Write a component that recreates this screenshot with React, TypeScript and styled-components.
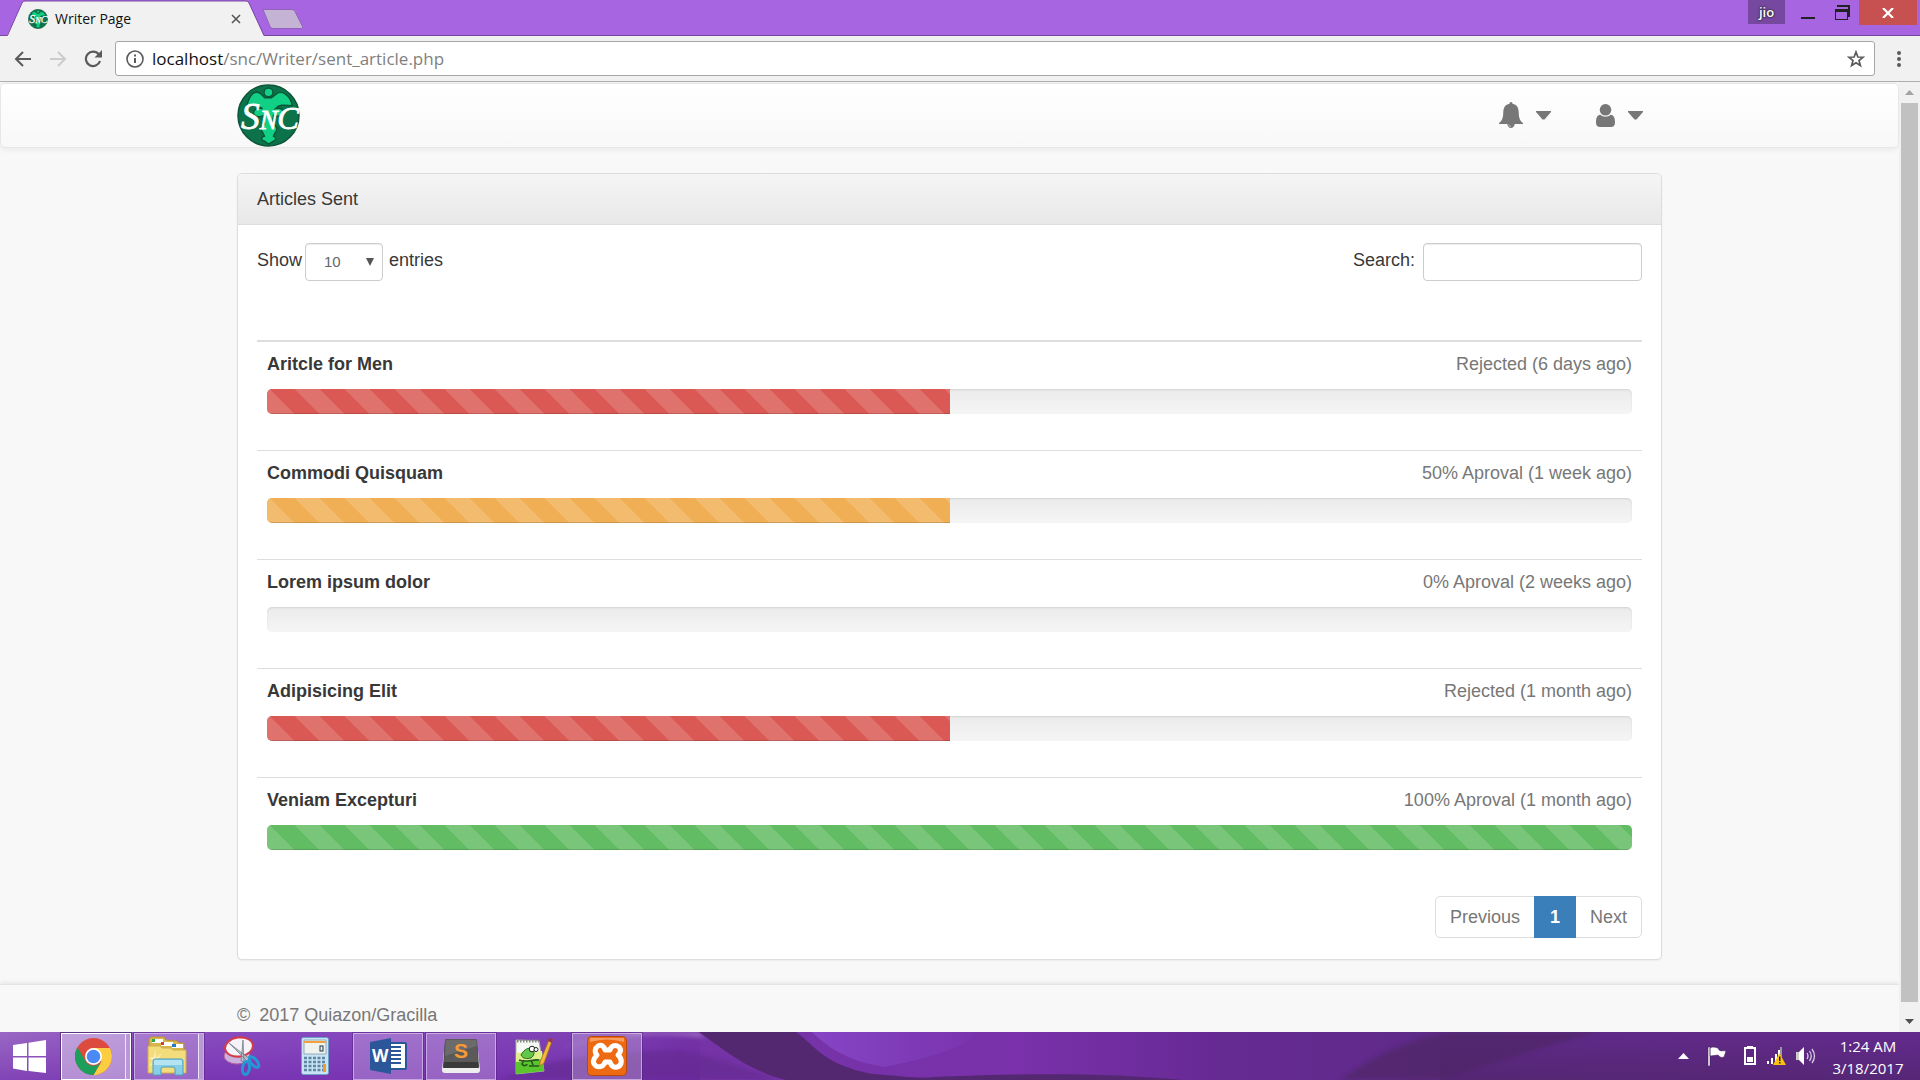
import React from 'react';
import styled, { createGlobalStyle, css } from 'styled-components';

const ui = `"Open Sans", "Noto Sans", sans-serif`;

const Global = createGlobalStyle`
  *, *::before, *::after { box-sizing: border-box; }
  html, body { margin: 0; height: 100%; }
  #root { height: 100%; }
  body { font-family: "Liberation Sans", Arial, sans-serif; font-size: 18px; line-height: 25px; color: #383838; overflow: hidden; }
  button { font: inherit; color: inherit; border: 0; padding: 0; margin: 0; background: none; cursor: pointer; }
  svg { display: block; }
`;

const Screen = styled.div`
  display: flex;
  flex-direction: column;
  height: 100vh;
`;

/* ---------- browser ---------- */
const TitleBar = styled.div`
  display: flex;
  height: 36px;
  background: #a865e2;
  border-bottom: 1px solid #7746a3;
`;
const Tab = styled.div`
  position: relative;
  width: 272px;
  height: 36px;
  flex: none;
  display: flex;
  align-items: center;
  padding: 2px 30px 0 28px;
`;
const TabShape = styled.svg`
  position: absolute;
  left: 0;
  top: 0;
`;
const TabTitle = styled.span`
  position: relative;
  flex: 1;
  margin-left: 7px;
  font: 14px/20px ${ui};
  color: #111;
`;
const TabIcon = styled.span`
  position: relative;
`;
const TabClose = styled.button`
  position: relative;
`;
const NewTab = styled.button`
  margin: 9px auto 0 -10px;
  height: 20px;
`;
const Profile = styled.button`
  width: 37px;
  height: 24px;
  margin-right: 6px;
  background: #77489f;
  color: #fff;
  font: 600 13px/22px ${ui};
  text-shadow: 0 0 2px #222, 0 0 2px #222;
`;
const WindowButton = styled.button<{ $close?: boolean }>`
  display: grid;
  place-items: center;
  width: ${(p) => (p.$close ? 58 : 34)}px;
  height: 25px;
  background: ${(p) => (p.$close ? '#c75050' : 'none')};
`;
const WindowButtons = styled.div`
  display: flex;
  padding-right: 3px;
`;
const Toolbar = styled.div`
  display: flex;
  align-items: center;
  height: 46px;
  flex: none;
  padding: 0 11px 0 12px;
  background: #f1f1f1;
  border-bottom: 1px solid #aeaeae;
`;
const ToolGroup = styled.div`
  display: flex;
  gap: 13px;
  padding-right: 11px;
`;
const ToolButton = styled.button`
  display: grid;
  place-items: center;
  width: 22px;
  height: 22px;
`;
const Omnibox = styled.div`
  display: flex;
  flex: 1;
  align-items: center;
  height: 35px;
  margin-right: 14px;
  padding: 0 9px 0 10px;
  gap: 8px;
  background: #fff;
  border: 1px solid #a6a6a6;
  border-radius: 3px;
`;
const Url = styled.a`
  flex: 1;
  font: 17px/24px ${ui};
  color: #808080;
  text-decoration: none;
  b { font-weight: 400; color: #111; }
`;

/* ---------- page ---------- */
const Viewport = styled.div`
  display: flex;
  flex: 1;
  min-height: 0;
  background: #f8f8f8;
`;
const Page = styled.div`
  flex: 1;
  min-width: 0;
  overflow: hidden;
  padding-top: 1px;
`;
const ScrollTrack = styled.div`
  display: flex;
  flex-direction: column;
  width: 21px;
  padding: 0 2px;
  background: #f1f1f1;
`;
const ScrollArrow = styled.button`
  display: grid;
  place-items: center;
  height: 21px;
  flex: none;
`;
const ScrollThumb = styled.div`
  flex: 1;
  margin-bottom: 9px;
  background: #c1c1c1;
`;
const NavBar = styled.nav`
  height: 65px;
  border: 1px solid #e7e7e7;
  border-radius: 5px;
  background: linear-gradient(#fff, #f8f8f8);
  box-shadow: 0 1px 6px rgba(0, 0, 0, 0.075);
`;
const Container = styled.div`
  max-width: 1425px;
  margin: 0 auto;
`;
const NavRow = styled(Container)`
  display: flex;
  align-items: flex-start;
  justify-content: space-between;
`;
const Menus = styled.div`
  display: flex;
  gap: 45px;
  padding: 18px 19px 0 0;
`;
const MenuButton = styled.button`
  display: flex;
  align-items: center;
  gap: 13px;
  height: 26px;
`;
const Panel = styled(Container).attrs({ as: 'section' })`
  margin-top: 25px;
  background: #fff;
  border: 1px solid #ddd;
  border-radius: 5px;
  box-shadow: 0 1px 2px rgba(0, 0, 0, 0.05);
`;
const PanelHeading = styled.h1`
  margin: 0;
  padding: 13px 19px 12px;
  font-size: inherit;
  font-weight: 400;
  line-height: 25px;
  background: linear-gradient(#f5f5f5, #e8e8e8);
  border-bottom: 1px solid #ddd;
  border-radius: 4px 4px 0 0;
`;
const PanelBody = styled.div`
  padding: 18px 19px 21px;
`;
const Controls = styled.div`
  display: flex;
  justify-content: space-between;
  height: 97px;
`;
const Field = styled.label`
  display: flex;
  line-height: 34px;
`;
const inputLook = css`
  height: 38px;
  border: 1px solid #ccc;
  border-radius: 4px;
  background: #fff;
  box-shadow: inset 0 1px 1px rgba(0, 0, 0, 0.075);
  color: #666;
  font: 15px/20px "Liberation Sans", Arial, sans-serif;
`;
const SelectWrap = styled.span`
  display: grid;
  align-items: center;
  margin: 0 6px 0 3px;
  height: 38px;
  > * { grid-area: 1 / 1; }
  svg { justify-self: end; margin-right: 9px; pointer-events: none; }
`;
const LengthSelect = styled.select`
  ${inputLook}
  width: 78px;
  padding: 0 18px;
  appearance: none;
`;
const SearchInput = styled.input`
  ${inputLook}
  width: 219px;
  margin-left: 8px;
  padding: 0 12px;
`;
const Table = styled.table`
  width: 100%;
  border-collapse: separate;
  border-spacing: 0;
  border-top: 2px solid #ddd;
`;
const Cell = styled.td`
  padding: 10px;
  tr + tr & { border-top: 1px solid #ddd; }
`;
const RowHead = styled.div`
  display: flex;
  justify-content: space-between;
  margin-bottom: 12px;
  line-height: 25px;
`;
const Status = styled.span`
  color: #777;
`;
const Track = styled.div`
  height: 25px;
  margin-bottom: 26px;
  overflow: hidden;
  border-radius: 5px;
  background: linear-gradient(#ebebeb, #f5f5f5);
  box-shadow: inset 0 1px 2px rgba(0, 0, 0, 0.1);
`;
const Fill = styled.div<{ $color: string }>`
  height: 100%;
  background-color: ${(p) => p.$color};
  background-image: linear-gradient(45deg, rgba(255, 255, 255, 0.15) 25%, transparent 25%, transparent 50%, rgba(255, 255, 255, 0.15) 50%, rgba(255, 255, 255, 0.15) 75%, transparent 75%, transparent);
  background-size: 50px 50px;
  background-position: 28px 0;
  box-shadow: inset 0 -1px 0 rgba(0, 0, 0, 0.15);
`;
const Pagination = styled.div`
  display: flex;
  justify-content: flex-end;
  margin-top: 10px;
`;
const PageButton = styled.button<{ $active?: boolean }>`
  height: 42px;
  padding: 0;
  border: 1px solid #ddd;
  color: #777;
  background: #fff;
  &:first-child { width: 100px; margin-right: -1px; border-radius: 5px 0 0 5px; }
  &:last-child { width: 67px; margin-left: -1px; border-radius: 0 5px 5px 0; }
  ${(p) => p.$active && css`
    position: relative;
    width: 42px;
    color: #fff;
    font-weight: 700;
    background: #3a7fba;
    border-color: #3a7fba;
  `}
`;
const Footer = styled.footer`
  margin-top: 24px;
  padding: 18px 0;
  border-top: 1px solid #e4e4e4;
  box-shadow: 0 -1px 5px rgba(0, 0, 0, 0.09);
  color: #777;
`;
const Mark = styled.span`
  margin-right: 9px;
`;

/* ---------- taskbar ---------- */
const TaskBar = styled.div`
  display: grid;
  height: 48px;
  flex: none;
  > * { grid-area: 1 / 1; min-width: 0; }
`;
const TaskRow = styled.div`
  z-index: 1;
  display: flex;
  justify-content: space-between;
`;
const Apps = styled.div`
  display: flex;
  align-items: center;
`;
const AppButton = styled.button<{ $state?: 'open' | 'active'; $stack?: boolean; $start?: boolean }>`
  display: grid;
  place-items: center;
  width: ${(p) => (p.$start ? 58 : 70)}px;
  height: 47px;
  margin-right: 3px;
  padding-right: ${(p) => (p.$stack ? 5 : 0)}px;
  ${(p) => p.$state === 'open' && css`
    background: rgba(255, 255, 255, 0.24);
    border: 1px solid rgba(224, 205, 240, 0.65);
    outline: 1px solid rgba(70, 25, 110, 0.4);
  `}
  ${(p) => p.$state === 'active' && css`
    background: rgba(255, 255, 255, 0.42);
    border: 1px solid #fff;
    outline: 1px solid #5b3380;
  `}
  ${(p) => p.$stack && css`
    box-shadow: inset -4px 0 0 rgba(130, 80, 180, 0.5), inset -5px 0 0 #efe3f8;
  `}
`;
const Tray = styled.div`
  display: flex;
  align-items: center;
`;
const TrayButton = styled.button<{ $gap: number }>`
  margin-right: ${(p) => p.$gap}px;
`;
const Clock = styled.time`
  width: 104px;
  padding-top: 2px;
  text-align: center;
  color: #fff;
  font: 15px/22px ${ui};
`;

/* ---------- drawings ---------- */
const Seal = ({ size }: { size: number }) => (
  <svg width={size} height={size} viewBox="0 0 64 64" aria-hidden="true">
    <circle cx="32" cy="32" r="31" fill="#0b7249" stroke="#0d5438" strokeWidth="1.5" />
    <g fill="#12cf86" stroke="#0a5536" strokeWidth="1.4">
      <path d="M28 14c-6-8-12-7-15 0-2 4-3 7-3 10 6-2 12-2 16 1-5-1-10 1-9 5 2 5 8 3 10 2l1 9c-4 1-5 5-2 8l2 4c-4 1-4 4 0 5l4 3 5-3c3-1 3-4 0-5l2-4c3-3 1-7-3-8l1-9c6 2 10 0 10-4 0-3-5-4-8-3 3-4 8-4 17-3-1-8-9-17-16-12l-5 4z" />
      <circle cx="32" cy="8.500" r="4.500" />
    </g>
    <text x="4" y="46" fill="#fff" stroke="#fff" strokeWidth=".8" fontFamily='"Liberation Serif", serif' fontStyle="italic">
      <tspan fontSize="38">S</tspan><tspan fontSize="27">N</tspan><tspan fontSize="33">C</tspan>
    </text>
  </svg>
);
const Caret = () => (
  <svg width="15" height="9" viewBox="0 0 15 9" aria-hidden="true"><path d="M0 0h15v1L8.500 8.500h-2L0 1z" fill="#777" /></svg>
);
const Bell = () => (
  <svg width="24" height="26" viewBox="0 0 24 26" aria-hidden="true">
    <path d="M12 0c1 0 1.500.7 1.500 1.800C17.800 2.500 19.600 6 19.700 10c.1 6 1.300 9 4.300 11v1h-8.300c-.2 2.300-1.700 4-3.700 4s-3.500-1.700-3.700-4H0v-1c3-2 4.200-5 4.300-11C4.400 6 6.200 2.500 10.500 1.800 10.500.7 11 0 12 0z" fill="#777" />
    <path d="M9.800 22.500c.2 1.300 1 2 2.200 2" fill="none" stroke="#ddd" strokeWidth=".7" />
  </svg>
);
const User = () => (
  <svg width="19" height="23" viewBox="0 0 19 23" aria-hidden="true">
    <circle cx="9.500" cy="5.800" r="5.800" fill="#777" />
    <path d="M4.200 10.800c3 2.500 7.600 2.500 10.600 0C18 11 19 14.500 19 18.500c0 3-1.500 4.500-4 4.500H4c-2.500 0-4-1.500-4-4.500 0-4 1-7.500 4.200-7.700z" fill="#777" />
  </svg>
);
const Wallpaper = () => (
  <svg width="100%" height="48" viewBox="0 0 1920 48" preserveAspectRatio="none" aria-hidden="true">
    <defs>
      <linearGradient id="sky">
        <stop offset="0" stopColor="#9a68c4" /><stop offset=".08" stopColor="#8a4fc0" /><stop offset=".2" stopColor="#8445bd" />
        <stop offset=".3" stopColor="#7f42b4" /><stop offset=".36" stopColor="#7433a6" /><stop offset=".53" stopColor="#7a31ab" />
        <stop offset=".63" stopColor="#672a94" /><stop offset=".75" stopColor="#5e2a88" /><stop offset=".9" stopColor="#622a89" /><stop offset="1" stopColor="#632b8e" />
      </linearGradient>
      <linearGradient id="fade" x2="0" y2="1"><stop offset="0" stopColor="#6a20a8" stopOpacity="0" /><stop offset="1" stopColor="#6a20a8" stopOpacity=".5" /></linearGradient>
      <linearGradient id="dusk" x2="0" y2="1"><stop offset="0" stopColor="#4d2467" stopOpacity="0" /><stop offset="1" stopColor="#4d2467" stopOpacity=".6" /></linearGradient>
      <linearGradient id="glow"><stop offset="0" stopColor="#8645c6" /><stop offset="1" stopColor="#8645c6" stopOpacity=".1" /></linearGradient>
      <filter id="soft"><feGaussianBlur stdDeviation="2" /></filter>
    </defs>
    <path d="M0 0h1920v48H0z" fill="url(#sky)" />
    <path d="M0 0h700v48H0z" fill="url(#fade)" />
    <path d="M500 48c40-22 110-28 180-30 40 8 70 20 100 30z" fill="#632a8e" opacity=".6" filter="url(#soft)" />
    <path d="M560 16c50-14 100-16 146-10l-8-6h-60z" fill="#b58ad0" opacity=".6" filter="url(#soft)" />
    <path d="M812 0h165c-10 16-50 26-92 35-40-6-58-21-73-35z" fill="url(#glow)" />
    <path d="M699 0h97c20 14 26 32 76 42 30 2 50 5 60 3 90-4 180-4 250 3H786C746 38 722 16 699 0z" fill="#542771" />
    <path d="M1340 48c30-20 60-40 110-48h150c-60 14-110 34-160 48z" fill="#4f2766" opacity=".7" filter="url(#soft)" />
    <path d="M1440 0h480v48h-480z" fill="url(#dusk)" />
  </svg>
);
const Windows = () => (
  <svg width="33" height="33" viewBox="0 0 33 33" fill="#fff" aria-hidden="true">
    <path d="M0 5l14-2v13H0zM15.500 2.700L33 0v16H15.500zM0 17.500h14V31L0 28.500zM15.500 17.500H33V33l-17.500-2z" />
  </svg>
);
const Chrome = () => (
  <svg width="37" height="37" viewBox="0 0 48 48" aria-hidden="true">
    <circle cx="24" cy="24" r="24" fill="#dd4b3e" />
    <path d="M24 13h21.200A24 24 0 0 1 24 48l10.400-18z" fill="#fdcd41" />
    <path d="M13.600 30A12 12 0 0 0 34.400 30L24 48A24 24 0 0 1 3.200 12z" fill="#1c9f5b" />
    <circle cx="24" cy="24" r="11" fill="#fff" /><circle cx="24" cy="24" r="8.800" fill="#4a8af4" />
  </svg>
);
const Explorer = () => (
  <svg width="40" height="40" viewBox="0 0 40 40" aria-hidden="true">
    <path d="M2 36V3l2-2h13l2 3 11 1 2 2h5v30z" fill="#d8b64c" stroke="#b99334" />
    <path d="M5 3h11v4H5zM14 6h12v4H14zM25 8h11v4H25z" fill="#fff" />
    <path d="M5 3h3v3H5z" fill="#2ca748" /><path d="M14 6h3v3h-3z" fill="#dc3b2e" /><path d="M25 8h4v3h-4z" fill="#247ac2" />
    <path d="M1 10h12l2 2h9l2 2h13v23H1z" fill="#f2dc7c" stroke="#cfae4b" />
    <path d="M8 12l1 10 6-5-4 6 9 2-9 1 2 7-5-6-6 4 4-7-5-2 6-1z" fill="#fff7cf" opacity=".7" />
    <path d="M6 39V25q0-2 2-2h26q2 0 2 2v14h-8v-6q0-2-2-2H16q-2 0-2 2v6z" fill="#86cfe6" stroke="#4e9fc0" />
    <path d="M7 24h28v5H7z" fill="#c8edf7" opacity=".7" />
  </svg>
);
const Snip = () => (
  <svg width="38" height="40" viewBox="0 0 38 40" aria-hidden="true">
    <ellipse cx="14" cy="20" rx="13" ry="8" fill="#c9b1df" stroke="#bb5a9b" />
    <ellipse cx="16" cy="11" rx="14" ry="9.500" fill="#f6f3fa" stroke="#d23b47" strokeWidth="2" transform="rotate(-8 16 11)" />
    <path d="M6 7l22 17-3 2zM20 4l1 22-3-1z" fill="#b9c0c8" stroke="#687482" strokeWidth=".7" />
    <ellipse cx="23" cy="32" rx="3.500" ry="6.500" fill="none" stroke="#2597d4" strokeWidth="3" transform="rotate(8 23 32)" />
    <ellipse cx="31" cy="26" rx="3" ry="6.500" fill="none" stroke="#2597d4" strokeWidth="3" transform="rotate(-40 31 26)" />
  </svg>
);
const Calc = () => (
  <svg width="28" height="38" viewBox="0 0 28 38" aria-hidden="true">
    <rect x=".5" y=".5" width="27" height="37" rx="2" fill="#c8e3f3" stroke="#6c9fc5" />
    <path d="M3 3h22v14H3z" fill="#eef3ee" stroke="#90aabb" /><path d="M3 4h22v2H3z" fill="#f3a23b" />
    <rect x="19" y="9" width="3" height="5" fill="none" stroke="#234" />
    <path d="M3 21h22M3 25h22M3 29h22M3 33h22" stroke="#5f87a5" strokeWidth="2.500" strokeDasharray="3 1.500" />
    <path d="M22 27h3v8h-3z" fill="#f39a27" />
  </svg>
);
const Word = () => (
  <svg width="37" height="36" viewBox="0 0 37 36" aria-hidden="true">
    <rect x="18" y="5" width="18" height="26" rx="1" fill="#fff" stroke="#2b579a" strokeWidth="2" />
    <path d="M21 9h10M21 13h10M21 17h10M21 21h10M21 25h10" stroke="#2b579a" strokeWidth="2" />
    <path d="M0 4l21-4v36L0 32z" fill="#2b579a" />
    <text x="2" y="24" fontSize="17" fontWeight="700" fill="#fff" fontFamily='"Open Sans", sans-serif'>W</text>
  </svg>
);
const Sublime = () => (
  <svg width="38" height="36" viewBox="0 0 38 36" aria-hidden="true">
    <path d="M2 13L0 32q0 3 3 3h32q3 0 3-3l-2-19z" fill="#eee" />
    <path d="M5 1h28q2 0 2 2l2 26q0 1-1 1H2q-1 0-1-1L3 3q0-2 2-2z" fill="#3a3a3a" />
    <path d="M5 1h28q2 0 2 2l1 21H2L3 3q0-2 2-2z" fill="#5a5a5a" /><path d="M4 2h30l1 6L3 18z" fill="#777" opacity=".6" />
    <text x="12" y="20" fontSize="21" fontWeight="700" fill="#f79a33" fontFamily='"Liberation Sans", sans-serif'>S</text>
  </svg>
);
const Notepad = () => (
  <svg width="38" height="38" viewBox="0 0 38 38" aria-hidden="true">
    <path d="M1 3l23 1 5 30-28 3z" fill="#f6f8f2" stroke="#a6b0a0" /><path d="M1 20l27-3 1 17-28 3z" fill="#5bc52e" />
    <path d="M1 16l26-2 1 8-27 3z" fill="#dff08a" /><path d="M2 4h22" stroke="#888" strokeWidth="3" strokeDasharray="1.500 1.500" />
    <path d="M4 23c8 3 13-1 20 0M9 23l-2 4c2 3 5 1 5 0m4-4l2 5m-4 1h10" fill="none" stroke="#24561f" strokeWidth="1.600" />
    <path d="M6 18c3-6 8-8 12-6 2 3 1 7-2 9-4 1-8 1-10-3z" fill="#63c84a" stroke="#2b6a22" />
    <circle cx="17" cy="12" r="2.800" fill="#fff" stroke="#222" /><circle cx="21" cy="12.500" r="2" fill="#fff" stroke="#222" />
    <path d="M34 3l3 1-8 22-4 3v-4z" fill="#f5b73e" stroke="#a56f1f" strokeWidth=".8" /><path d="M34 1l4 1-1 4-4-2z" fill="#983848" />
  </svg>
);
const Xampp = () => (
  <svg width="40" height="40" viewBox="0 0 40 40" aria-hidden="true">
    <rect x=".5" y=".5" width="39" height="39" rx="4" fill="#ee6a12" stroke="#b64a0e" /><path d="M3 2h34v4Q20 1 3 6z" fill="#f8b585" opacity=".7" />
    <path d="M11 10c3-2 6 0 7 4h5c1-4 5-6 9-3 3 3 1 6-1 8 5 4 4 11-1 12-4 1-6-2-7-5h-5c-1 4-5 6-9 4-4-3-3-7 1-11-3-3-2-7 1-9z" fill="none" stroke="#fff" strokeWidth="5" strokeLinejoin="round" />
  </svg>
);

type Article = { title: string; status: string; value: number; color: string };
const articles: Article[] = [
  { title: 'Aritcle for Men', status: 'Rejected (6 days ago)', value: 50, color: '#da5954' },
  { title: 'Commodi Quisquam', status: '50% Aproval (1 week ago)', value: 50, color: '#f0af55' },
  { title: 'Lorem ipsum dolor', status: '0% Aproval (2 weeks ago)', value: 0, color: '#62bc63' },
  { title: 'Adipisicing Elit', status: 'Rejected (1 month ago)', value: 50, color: '#da5954' },
  { title: 'Veniam Excepturi', status: '100% Aproval (1 month ago)', value: 100, color: '#62bc63' },
];

const BrowserChrome = () => (
  <>
    <TitleBar>
      <Tab>
        <TabShape width="272" height="36" viewBox="0 0 272 36" aria-hidden="true">
          <path d="M7 36L22 3q1-2 3-2h221q2 0 3 2l15 33z" fill="#f1f1f1" />
          <path d="M0 35.500h7.500L22 3q1-2 3-2h221q2 0 3 2l15 32.500h8" fill="none" stroke="#7746a3" />
        </TabShape>
        <TabIcon><Seal size={20} /></TabIcon>
        <TabTitle>Writer Page</TabTitle>
        <TabClose aria-label="Close tab">
          <svg width="12" height="12" viewBox="0 0 12 12"><path d="M2 2l8 8M10 2l-8 8" stroke="#555" strokeWidth="1.600" /></svg>
        </TabClose>
      </Tab>
      <NewTab aria-label="New tab">
        <svg width="42" height="20" viewBox="0 0 42 20"><path d="M1 .5h29q2 0 3 2l7.500 15q.8 2-1.500 2H11q-2 0-3-2z" fill="#c5b3d5" stroke="#9063b8" /></svg>
      </NewTab>
      <WindowButtons>
        <Profile>jio</Profile>
        <WindowButton aria-label="Minimize"><svg width="14" height="18" viewBox="0 0 14 18"><path d="M0 13h14v2H0z" fill="#222" /></svg></WindowButton>
        <WindowButton aria-label="Restore"><svg width="15" height="16" viewBox="0 0 15 16"><path d="M2 1h12v11" fill="none" stroke="#222" strokeWidth="2" /><path d="M0 4h13v11H0zm1 3v7h11V7z" fill="#222" fillRule="evenodd" /></svg></WindowButton>
        <WindowButton $close aria-label="Close"><svg width="12" height="10" viewBox="0 0 12 10"><path d="M1 0l10 10M11 0L1 10" stroke="#fff" strokeWidth="2.200" /></svg></WindowButton>
      </WindowButtons>
    </TitleBar>
    <Toolbar>
      <ToolGroup>
        <ToolButton aria-label="Back"><svg width="18" height="16" viewBox="0 0 18 16"><path d="M17 8H2M9 1L2 8l7 7" fill="none" stroke="#5a5a5a" strokeWidth="2" /></svg></ToolButton>
        <ToolButton aria-label="Forward"><svg width="18" height="16" viewBox="0 0 18 16"><path d="M1 8h15M9 1l7 7-7 7" fill="none" stroke="#ccc" strokeWidth="2" /></svg></ToolButton>
        <ToolButton aria-label="Reload"><svg width="18" height="18" viewBox="0 0 18 18"><path d="M14.800 4.500A7.200 7.200 0 1 0 16 11" fill="none" stroke="#5a5a5a" strokeWidth="2.200" /><path d="M18 0v7.500h-7.500z" fill="#5a5a5a" /></svg></ToolButton>
      </ToolGroup>
      <Omnibox>
        <svg width="18" height="18" viewBox="0 0 18 18" aria-hidden="true"><circle cx="9" cy="9" r="8" fill="none" stroke="#5a5a5a" strokeWidth="1.600" /><path d="M8 8h2v5H8zM8 4.500h2v2H8z" fill="#5a5a5a" /></svg>
        <Url href="#"><b>localhost</b>/snc/Writer/sent_article.php</Url>
        <button aria-label="Bookmark this page"><svg width="18" height="18" viewBox="0 0 18 18"><path d="M9 2l1.900 5 5.200.2-4.100 3.300 1.400 5L9 12.700l-4.400 2.800 1.400-5L1.900 7.200 7.100 7z" fill="none" stroke="#5a5a5a" strokeWidth="1.700" /></svg></button>
      </Omnibox>
      <button aria-label="Menu"><svg width="20" height="18" viewBox="0 0 20 18" fill="#5a5a5a"><circle cx="10" cy="3" r="2" /><circle cx="10" cy="9" r="2" /><circle cx="10" cy="15" r="2" /></svg></button>
    </Toolbar>
  </>
);

const Taskbar = () => (
  <TaskBar>
    <Wallpaper />
    <TaskRow>
      <Apps>
        <AppButton $start aria-label="Start"><Windows /></AppButton>
        <AppButton $state="active" $stack aria-label="Chrome"><Chrome /></AppButton>
        <AppButton $state="open" $stack aria-label="File Explorer"><Explorer /></AppButton>
        <AppButton aria-label="Snipping Tool"><Snip /></AppButton>
        <AppButton aria-label="Calculator"><Calc /></AppButton>
        <AppButton $state="open" aria-label="Word"><Word /></AppButton>
        <AppButton $state="open" aria-label="Sublime Text"><Sublime /></AppButton>
        <AppButton aria-label="Notepad++"><Notepad /></AppButton>
        <AppButton $state="open" aria-label="XAMPP"><Xampp /></AppButton>
      </Apps>
      <Tray>
        <TrayButton $gap={18} aria-label="Show hidden icons"><svg width="11" height="6" viewBox="0 0 11 6"><path d="M5.500 0L11 6H0z" fill="#fff" /></svg></TrayButton>
        <TrayButton $gap={18} aria-label="Action center"><svg width="19" height="20" viewBox="0 0 19 20"><path d="M1 1h2v19H1zM3 2c4-2 6 0 8 0l1 2c3 2 4 0 7 1l-2 6c-3 1-4 0-6-2-3 0-5 1-8 1z" fill="#fff" stroke="#3a1a55" strokeWidth=".5" /></svg></TrayButton>
        <TrayButton $gap={10} aria-label="Battery"><svg width="12" height="20" viewBox="0 0 12 20"><path d="M4 0h4v2H4zM1 2h10v16H1z" fill="none" stroke="#fff" strokeWidth="2" /><path d="M3 11h6v5H3z" fill="#fff" /></svg></TrayButton>
        <TrayButton $gap={10} aria-label="Network"><svg width="20" height="20" viewBox="0 0 20 20"><path d="M1 15h2v3H1zM5 12h2v6H5zM9 8h2v10H9zM12 4h2v14h-2z" fill="#fff" /><path d="M14 1h2v10h-2z" fill="#999" /><path d="M13.500 7L20 19H7z" fill="#fdc010" /><path d="M13 10.500h1.500v4.500H13zM13 16h1.500v1.500H13z" fill="#222" /></svg></TrayButton>
        <TrayButton $gap={0} aria-label="Volume"><svg width="20" height="20" viewBox="0 0 20 20"><path d="M0 6h3v8H0z" fill="#ccc" /><path d="M3 6l5-5v18l-5-5z" fill="#fff" /><path d="M11 7q2 3 0 6M13.500 5q3.500 5 0 10M16 3q5 7 0 14" fill="none" stroke="#d9cbe6" strokeWidth="1.300" /></svg></TrayButton>
        <Clock>1:24 AM<br />3/18/2017</Clock>
      </Tray>
    </TaskRow>
  </TaskBar>
);

export default function App() {
  return (
    <Screen>
      <Global />
      <BrowserChrome />
      <Viewport>
        <Page>
          <NavBar>
            <NavRow>
              <a href="#" aria-label="Home"><Seal size={63} /></a>
              <Menus>
                <MenuButton aria-label="Notifications"><Bell /><Caret /></MenuButton>
                <MenuButton aria-label="Account"><User /><Caret /></MenuButton>
              </Menus>
            </NavRow>
          </NavBar>
          <Panel>
            <PanelHeading>Articles Sent</PanelHeading>
            <PanelBody>
              <Controls>
                <Field>
                  Show
                  <SelectWrap>
                    <LengthSelect defaultValue="10"><option>10</option><option>25</option><option>50</option></LengthSelect>
                    <svg width="8" height="8" viewBox="0 0 8 8" aria-hidden="true"><path d="M0 0h8L4 8z" fill="#555" /></svg>
                  </SelectWrap>
                  entries
                </Field>
                <Field>Search:<SearchInput type="search" /></Field>
              </Controls>
              <Table>
                <tbody>
                  {articles.map((a) => (
                    <tr key={a.title}>
                      <Cell>
                        <RowHead><strong>{a.title}</strong><Status>{a.status}</Status></RowHead>
                        <Track role="progressbar" aria-label={a.title} aria-valuenow={a.value}>
                          <Fill $color={a.color} style={{ width: `${a.value}%` }} />
                        </Track>
                      </Cell>
                    </tr>
                  ))}
                </tbody>
              </Table>
              <Pagination>
                <PageButton>Previous</PageButton>
                <PageButton $active>1</PageButton>
                <PageButton>Next</PageButton>
              </Pagination>
            </PanelBody>
          </Panel>
          <Footer><Container><Mark>©</Mark>2017 Quiazon/Gracilla</Container></Footer>
        </Page>
        <ScrollTrack>
          <ScrollArrow aria-label="Scroll up"><svg width="9" height="5" viewBox="0 0 9 5"><path d="M4.500 0L9 5H0z" fill="#a3a3a3" /></svg></ScrollArrow>
          <ScrollThumb />
          <ScrollArrow aria-label="Scroll down"><svg width="9" height="5" viewBox="0 0 9 5"><path d="M0 0h9L4.500 5z" fill="#505050" /></svg></ScrollArrow>
        </ScrollTrack>
      </Viewport>
      <Taskbar />
    </Screen>
  );
}
